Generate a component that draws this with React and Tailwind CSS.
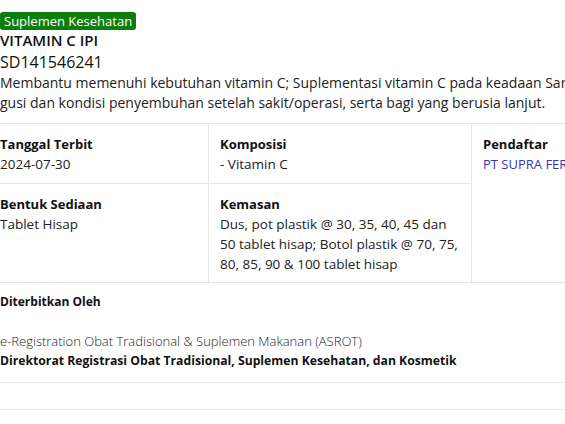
export default function App() {
  return (
    <div
      className="w-[565px] h-[424px] overflow-hidden bg-white text-[#222] relative"
      style={{ fontFamily: '"Open Sans", "Noto Sans", sans-serif' }}
    >
      <div className="w-[760px]">
        <div className="pt-[11px] leading-[18px]">
          <span className="inline-block bg-[#0e7d0e] text-white text-[13px] leading-[18px] px-[4px] rounded-[3px]">
            Suplemen Kesehatan
          </span>
        </div>
        <div className="text-[15px] font-semibold leading-[21px] text-[#111]">VITAMIN C IPI</div>
        <div className="text-[16px] leading-[21px] text-[#111] mt-[1px]">SD141546241</div>
        <div className="text-[14px] leading-[20px] text-[#222]">
          <div className="whitespace-nowrap">
            Membantu memenuhi kebutuhan vitamin C; Suplementasi vitamin C pada keadaan Sariawan,
          </div>
          <div className="whitespace-nowrap">
            gusi dan kondisi penyembuhan setelah sakit/operasi, serta bagi yang berusia lanjut.
          </div>
        </div>

        <div className="mt-[10px] border-t border-b border-[#e6e6e6] grid grid-cols-[208px_263px_1fr] text-[13.5px] leading-[20px]">
          <div className="pt-[10px] pb-[9px] border-b border-[#e6e6e6]">
            <div className="font-bold text-[13px] text-[#111]">Tanggal Terbit</div>
            <div>2024-07-30</div>
          </div>
          <div className="pt-[10px] pb-[9px] px-[11px] border-l border-b border-[#e6e6e6]">
            <div className="font-bold text-[13px] text-[#111]">Komposisi</div>
            <div>- Vitamin C</div>
          </div>
          <div className="row-span-2 pt-[10px] px-[11px] border-l border-[#e6e6e6]">
            <div className="font-bold text-[13px] text-[#111]">Pendaftar</div>
            <div className="text-[#3b35b5] text-[13px] whitespace-nowrap">PT SUPRA FERBINDO FARMA</div>
          </div>
          <div className="pt-[10px] pb-[8px]">
            <div className="font-bold text-[13px] text-[#111]">Bentuk Sediaan</div>
            <div>Tablet Hisap</div>
          </div>
          <div className="pt-[10px] pb-[8px] px-[11px] border-l border-[#e6e6e6]">
            <div className="font-bold text-[13px] text-[#111]">Kemasan</div>
            <div className="whitespace-nowrap">Dus, pot plastik @ 30, 35, 40, 45 dan</div>
            <div className="whitespace-nowrap">50 tablet hisap; Botol plastik @ 70, 75,</div>
            <div className="whitespace-nowrap">80, 85, 90 &amp; 100 tablet hisap</div>
          </div>
        </div>

        <div className="pt-[9px] pb-[11px] border-b border-[#e6e6e6] leading-[20px]">
          <div className="font-bold text-[12px] text-[#111]">Diterbitkan Oleh</div>
          <div className="mt-[19px] font-light text-[13px] text-[#222]">
            e-Registration Obat Tradisional &amp; Suplemen Makanan (ASROT)
          </div>
          <div className="font-bold text-[12.2px] text-[#111]">
            Direktorat Registrasi Obat Tradisional, Suplemen Kesehatan, dan Kosmetik
          </div>
        </div>
        <div className="h-[27px] border-b border-[#e6e6e6]"></div>
      </div>
    </div>
  );
}
